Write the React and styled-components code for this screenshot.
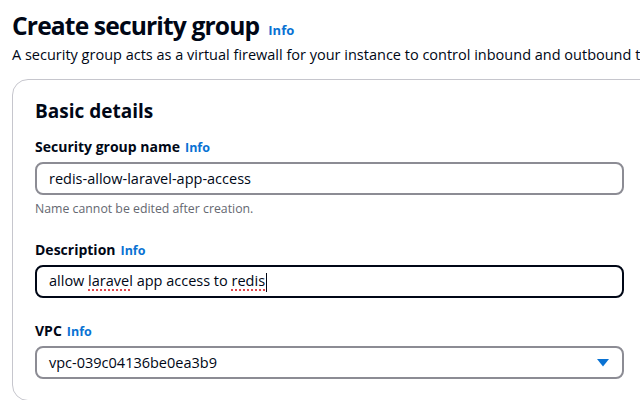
import React from 'react';
import styled, { createGlobalStyle } from 'styled-components';

const GlobalStyle = createGlobalStyle`
  html, body {
    margin: 0;
    padding: 0;
    background: #ffffff;
    overflow: hidden;
  }
  body {
    font-family: "Open Sans", "Noto Sans", Arial, sans-serif;
    color: #000716;
  }
`;

const Page = styled.div`
  width: 640px;
  height: 400px;
  overflow: hidden;
  padding: 9px 0 0 12px;
  box-sizing: border-box;
`;

const TitleRow = styled.div`
  display: flex;
  align-items: baseline;
  gap: 9px;
  white-space: nowrap;
`;

const Title = styled.h1`
  margin: 0;
  font-size: 24.6px;
  line-height: 34px;
  font-weight: 700;
  letter-spacing: -0.85px;
`;

const InfoLink = styled.a`
  color: #0972d3;
  font-weight: 700;
  font-size: ${p => (p.$big ? '13px' : '12.5px')};
  text-decoration: none;
`;

const Subtitle = styled.p`
  margin: 2px 0 0;
  font-size: 14.5px;
  line-height: 20px;
  white-space: nowrap;
`;

const Card = styled.section`
  margin-top: 14px;
  width: 700px;
  height: 322px;
  box-sizing: border-box;
  border: 1px solid #c6c6cd;
  border-radius: 16px;
  padding: 18px 0 0 22px;
`;

const CardTitle = styled.h2`
  margin: 0 0 13px;
  font-size: 19px;
  line-height: 26px;
  font-weight: 700;
`;

const Field = styled.div`
  width: 589px;
  margin-bottom: ${p => p.$gap || '22px'};
`;

const Label = styled.div`
  display: flex;
  align-items: baseline;
  gap: 5px;
  font-size: 14px;
  line-height: 20px;
  font-weight: 700;
  margin-bottom: 4px;
`;

const Box = styled.div`
  height: 33px;
  box-sizing: border-box;
  border: 2px solid ${p => (p.$focus ? '#000716' : '#8c8c94')};
  border-radius: 8px;
  padding: 0 12px;
  display: flex;
  align-items: center;
  justify-content: space-between;
  font-size: 14.5px;
  white-space: nowrap;
`;

const Misspelled = styled.span`
  text-decoration: underline dotted #e0474c;
  text-underline-offset: 3px;
  text-decoration-thickness: 1.5px;
`;

const Caret = styled.span`
  display: inline-block;
  width: 1px;
  height: 19px;
  background: #000716;
  vertical-align: middle;
  margin-left: 1px;
`;

const Hint = styled.div`
  margin-top: 6px;
  font-size: 12.3px;
  line-height: 16px;
  color: #656871;
`;

const Arrow = () => (
  <svg width="14" height="10" viewBox="0 0 14 10">
    <path d="M1 1 H13 L7 8.5 Z" fill="#0972d3" />
  </svg>
);

export default function App() {
  return (
    <Page>
      <GlobalStyle />
      <TitleRow>
        <Title>Create security group</Title>
        <InfoLink $big>Info</InfoLink>
      </TitleRow>
      <Subtitle>
        A security group acts as a virtual firewall for your instance to control inbound and outbound t
      </Subtitle>
      <Card>
        <CardTitle>Basic details</CardTitle>
        <Field $gap="23px">
          <Label>Security group name <InfoLink>Info</InfoLink></Label>
          <Box>redis-allow-laravel-app-access</Box>
          <Hint>Name cannot be edited after creation.</Hint>
        </Field>
        <Field $gap="23px">
          <Label>Description <InfoLink>Info</InfoLink></Label>
          <Box $focus>
            <span>
              allow <Misspelled>laravel</Misspelled> app access to <Misspelled>redis</Misspelled>
              <Caret />
            </span>
          </Box>
        </Field>
        <Field>
          <Label>VPC <InfoLink>Info</InfoLink></Label>
          <Box>
            <span>vpc-039c04136be0ea3b9</span>
            <Arrow />
          </Box>
        </Field>
      </Card>
    </Page>
  );
}
